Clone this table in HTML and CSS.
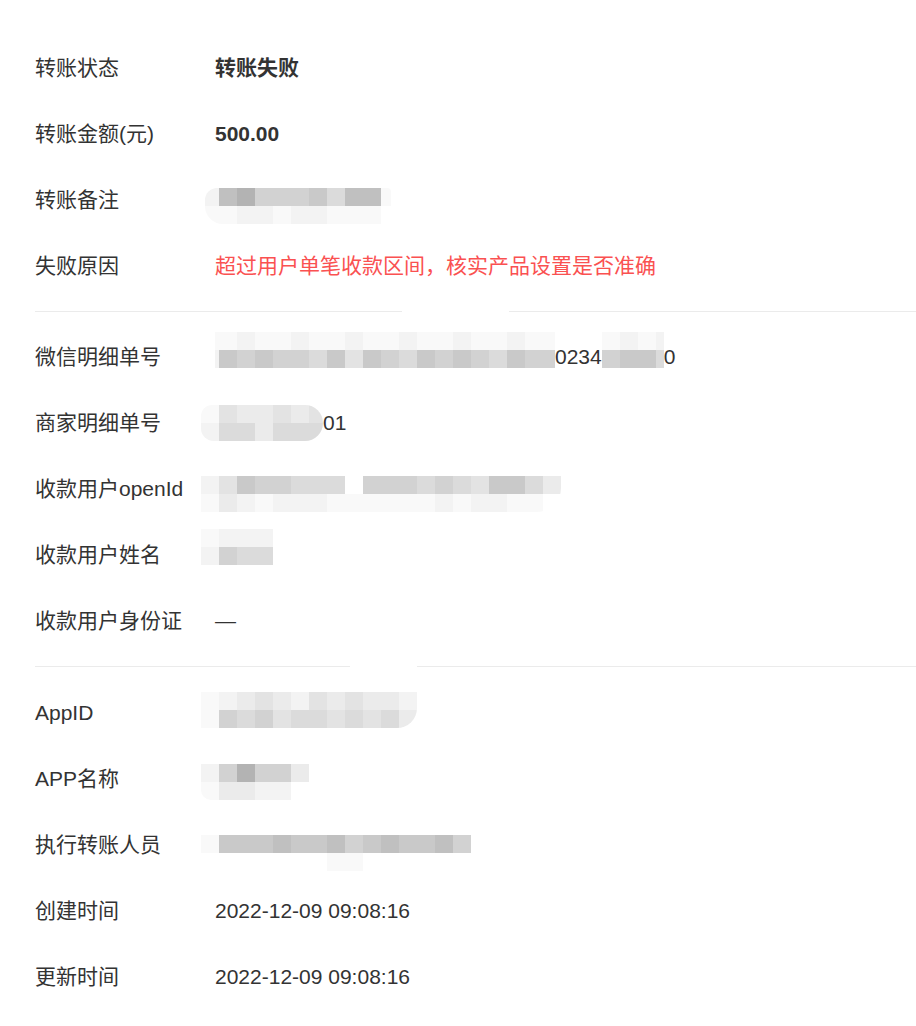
FILE: index.html
```html
<!DOCTYPE html>
<html lang="zh-CN">
<head>
    <meta charset="UTF-8">
    <meta name="viewport" content="width=device-width, initial-scale=1.0">
    <title>转账明细</title>
    <link rel="stylesheet" href="styles.css">
</head>
<body>
    <div class="detail">
        <div class="section">
            <div class="row">
                <div class="label">转账状态</div>
                <div class="value strong">转账失败</div>
            </div>
            <div class="row">
                <div class="label">转账金额(元)</div>
                <div class="value strong">500.00</div>
            </div>
            <div class="row">
                <div class="label">转账备注</div>
                <div class="value">
                    <span class="mosaic mz-note">
                        <span class="mrow"><i class="w14 s2"></i><i class="s8"></i><i class="s9"></i><i class="s6"></i><i class="s6"></i><i class="s6"></i><i class="s7"></i><i class="s5"></i><i class="s8"></i><i class="s8"></i><i class="w10 s1"></i></span>
                        <span class="mrow"><i class="w14 s1"></i><i class="s1"></i><i class="s2"></i><i class="s2"></i><i class="s1"></i><i class="s2"></i><i class="s2"></i><i class="s1"></i><i class="s1"></i><i class="s1"></i><i class="w10 s0"></i></span>
                    </span>
                </div>
            </div>
            <div class="row">
                <div class="label">失败原因</div>
                <div class="value danger">超过用户单笔收款区间，核实产品设置是否准确</div>
            </div>
        </div>

        <div class="divider divider-a"></div>

        <div class="section">
            <div class="row">
                <div class="label">微信明细单号</div>
                <div class="value">
                    <span class="mosaic mz-wx">
                        <span class="mrow"><i class="w4 s1"></i><i class="s1"></i><i class="s2"></i><i class="s1"></i><i class="s1"></i><i class="s2"></i><i class="s1"></i><i class="s1"></i><i class="s2"></i><i class="s1"></i><i class="s1"></i><i class="s2"></i><i class="s1"></i><i class="s1"></i><i class="s2"></i><i class="s1"></i><i class="s1"></i><i class="s2"></i><i class="s1"></i><i class="w12 s1"></i></span>
                        <span class="mrow"><i class="w4 s2"></i><i class="s7"></i><i class="s6"></i><i class="s7"></i><i class="s6"></i><i class="s6"></i><i class="s5"></i><i class="s7"></i><i class="s4"></i><i class="s7"></i><i class="s6"></i><i class="s5"></i><i class="s7"></i><i class="s6"></i><i class="s7"></i><i class="s6"></i><i class="s5"></i><i class="s7"></i><i class="s6"></i><i class="w12 s6"></i></span>
                    </span>
                    <span>0234</span>
                    <span class="mosaic mz-wx">
                        <span class="mrow"><i class="s1"></i><i class="s2"></i><i class="s1"></i><i class="w8 s2"></i></span>
                        <span class="mrow"><i class="s6"></i><i class="s7"></i><i class="s7"></i><i class="w8 s5"></i></span>
                    </span>
                    <span>0</span>
                </div>
            </div>
            <div class="row">
                <div class="label">商家明细单号</div>
                <div class="value">
                    <span class="mosaic mz-merchant">
                        <span class="mrow"><i class="s1"></i><i class="s4"></i><i class="s3"></i><i class="s3"></i><i class="s4"></i><i class="s3"></i><i class="w14 s4"></i></span>
                        <span class="mrow"><i class="s2"></i><i class="s5"></i><i class="s5"></i><i class="s3"></i><i class="s5"></i><i class="s5"></i><i class="w14 s5"></i></span>
                    </span>
                    <span>01</span>
                </div>
            </div>
            <div class="row">
                <div class="label">收款用户openId</div>
                <div class="value">
                    <span class="mosaic mz-openid">
                        <span class="mrow"><i class="s2"></i><i class="s4"></i><i class="s7"></i><i class="s6"></i><i class="s6"></i><i class="s5"></i><i class="s5"></i><i class="s5"></i><i class="s0"></i><i class="s6"></i><i class="s6"></i><i class="s6"></i><i class="s5"></i><i class="s6"></i><i class="s5"></i><i class="s4"></i><i class="s7"></i><i class="s7"></i><i class="s5"></i><i class="s3"></i></span>
                        <span class="mrow"><i class="s1"></i><i class="s3"></i><i class="s2"></i><i class="s1"></i><i class="s2"></i><i class="s2"></i><i class="s2"></i><i class="s1"></i><i class="s1"></i><i class="s1"></i><i class="s1"></i><i class="s1"></i><i class="s1"></i><i class="s2"></i><i class="s1"></i><i class="s2"></i><i class="s2"></i><i class="s1"></i><i class="s1"></i><i class="s0"></i></span>
                    </span>
                </div>
            </div>
            <div class="row">
                <div class="label">收款用户姓名</div>
                <div class="value">
                    <span class="mosaic mz-name">
                        <span class="mrow"><i class="s1"></i><i class="s2"></i><i class="s2"></i><i class="s2"></i></span>
                        <span class="mrow"><i class="s2"></i><i class="s6"></i><i class="s5"></i><i class="s5"></i></span>
                    </span>
                </div>
            </div>
            <div class="row">
                <div class="label">收款用户身份证</div>
                <div class="value">—</div>
            </div>
        </div>

        <div class="divider divider-b"></div>

        <div class="section">
            <div class="row">
                <div class="label">AppID</div>
                <div class="value">
                    <span class="mosaic mz-appid">
                        <span class="mrow"><i class="s1"></i><i class="s2"></i><i class="s3"></i><i class="s4"></i><i class="s3"></i><i class="s2"></i><i class="s4"></i><i class="s3"></i><i class="s4"></i><i class="s3"></i><i class="s3"></i><i class="s2"></i></span>
                        <span class="mrow"><i class="s1"></i><i class="s6"></i><i class="s5"></i><i class="s6"></i><i class="s4"></i><i class="s5"></i><i class="s5"></i><i class="s4"></i><i class="s5"></i><i class="s4"></i><i class="s5"></i><i class="s3"></i></span>
                    </span>
                </div>
            </div>
            <div class="row">
                <div class="label">APP名称</div>
                <div class="value">
                    <span class="mosaic mz-appname">
                        <span class="mrow"><i class="s2"></i><i class="s6"></i><i class="s9"></i><i class="s6"></i><i class="s6"></i><i class="s3"></i></span>
                        <span class="mrow"><i class="s1"></i><i class="s3"></i><i class="s3"></i><i class="s2"></i><i class="s2"></i><i class="s0"></i></span>
                    </span>
                </div>
            </div>
            <div class="row">
                <div class="label">执行转账人员</div>
                <div class="value">
                    <span class="mosaic mz-operator">
                        <span class="mrow"><i class="s1"></i><i class="s7"></i><i class="s7"></i><i class="s7"></i><i class="s8"></i><i class="s7"></i><i class="s7"></i><i class="s8"></i><i class="s6"></i><i class="s7"></i><i class="s8"></i><i class="s7"></i><i class="s7"></i><i class="s8"></i><i class="s6"></i></span>
                        <span class="mrow"><i class="s0"></i><i class="s0"></i><i class="s0"></i><i class="s0"></i><i class="s0"></i><i class="s0"></i><i class="s0"></i><i class="s1"></i><i class="s1"></i><i class="s0"></i><i class="s0"></i><i class="s0"></i><i class="s0"></i><i class="s0"></i><i class="s0"></i></span>
                    </span>
                </div>
            </div>
            <div class="row">
                <div class="label">创建时间</div>
                <div class="value">2022-12-09 09:08:16</div>
            </div>
            <div class="row">
                <div class="label">更新时间</div>
                <div class="value">2022-12-09 09:08:16</div>
            </div>
        </div>
    </div>
</body>
</html>
```

FILE: styles.css
```css
* {
    margin: 0;
    padding: 0;
    box-sizing: border-box;
}

body {
    font-family: "Liberation Sans", "Noto Sans CJK SC", sans-serif;
    font-size: 21px;
    color: #333;
    background: #fff;
}

.detail {
    padding: 35px 0 0 35px;
}

.row {
    display: flex;
    align-items: center;
    height: 66px;
}

.label {
    width: 180px;
    flex-shrink: 0;
    line-height: 1.4;
}

.value {
    display: flex;
    align-items: center;
    line-height: 1.4;
    white-space: nowrap;
}

.strong {
    font-weight: bold;
}

.danger {
    color: #fa5151;
}

.divider {
    height: 1px;
    margin: 12px 0;
    background: #ebebeb;
}

.divider-a {
    background: linear-gradient(to right, #ebebeb 0 367px, #fff 367px 474px, #ebebeb 474px);
}

.divider-b {
    margin-bottom: 13px;
    background: linear-gradient(to right, #ebebeb 0 315px, #fff 315px 382px, #ebebeb 382px);
}

/* pixelated (masked) values */
.mosaic {
    display: inline-flex;
    flex-direction: column;
    overflow: hidden;
}

.mrow {
    display: flex;
}

.mrow i {
    display: block;
    width: 18px;
    height: 18px;
}

.mrow i.w4 { width: 4px; }
.mrow i.w8 { width: 8px; }
.mrow i.w10 { width: 10px; }
.mrow i.w12 { width: 12px; }
.mrow i.w14 { width: 14px; }

.s0 { background: #fff; }
.s1 { background: #f9f9f9; }
.s2 { background: #f3f3f3; }
.s3 { background: #ebebeb; }
.s4 { background: #e3e3e3; }
.s5 { background: #dbdbdb; }
.s6 { background: #d2d2d2; }
.s7 { background: #c9c9c9; }
.s8 { background: #c0c0c0; }
.s9 { background: #b3b3b3; }

.mz-note {
    margin: 12px 0 0 -10px;
    border-radius: 12px 4px 10px 18px;
}

.mz-wx {
    margin-bottom: 14px;
}

.mz-merchant {
    margin-left: -14px;
    border-radius: 16px 26px 26px 18px;
}

.mz-openid {
    margin: 10px 0 0 -14px;
    border-radius: 0 0 24px 0;
}

.mz-name {
    margin: 0 0 16px -14px;
}

.mz-appid {
    margin: 0 0 6px -14px;
    border-radius: 0 0 20px 0;
}

.mz-appname {
    margin: 6px 0 0 -14px;
    border-radius: 0 0 0 10px;
}

.mz-operator {
    margin: 16px 0 0 -14px;
}
```
